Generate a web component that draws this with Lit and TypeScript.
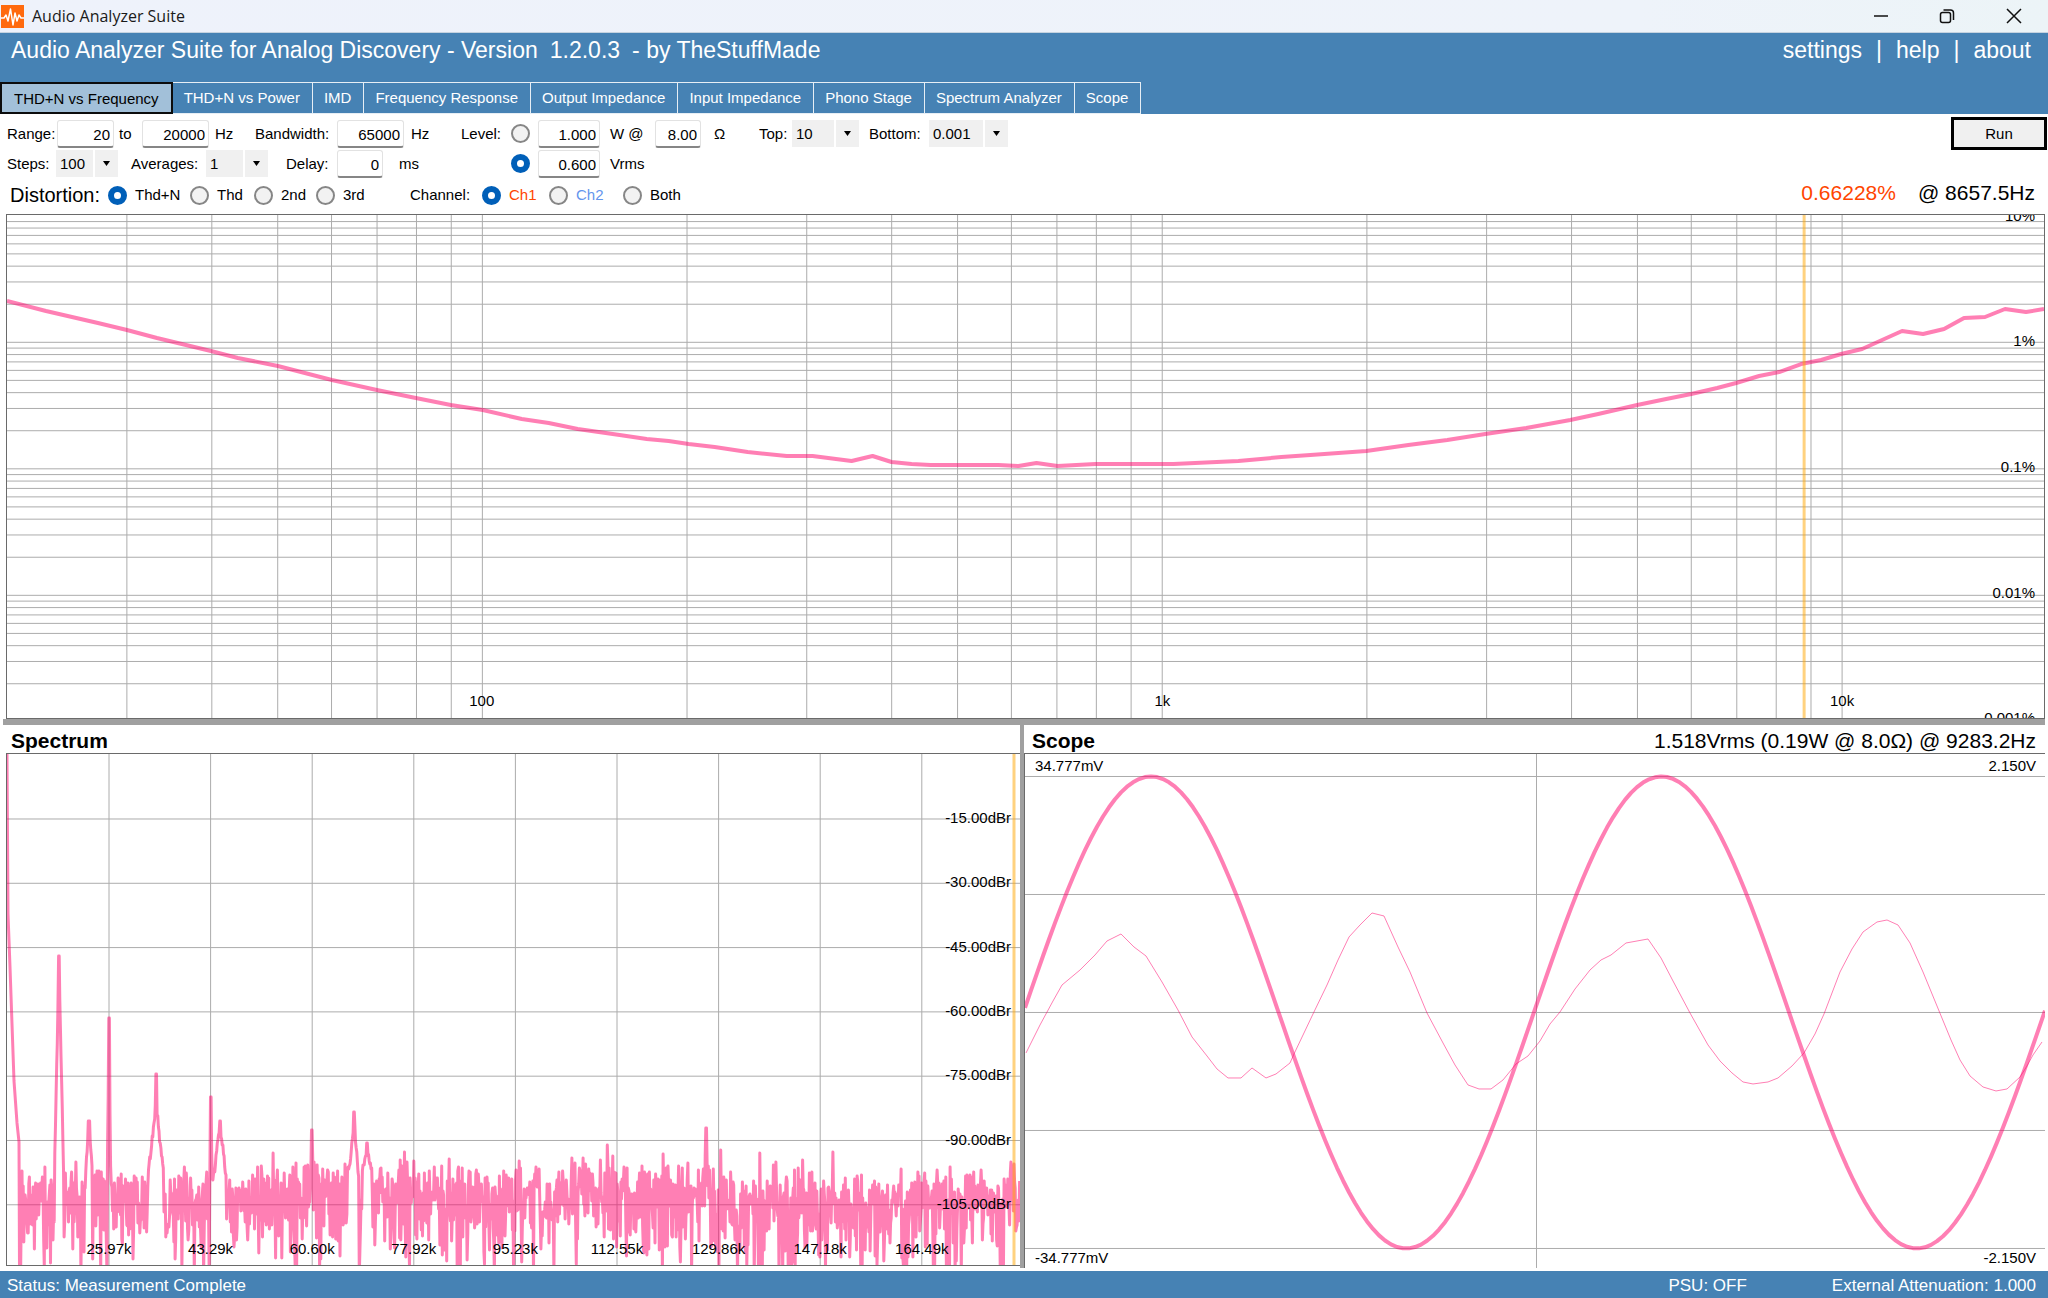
import { LitElement, html, svg, css } from "lit";
import { customElement, property, state } from "lit/decorators.js";
import { classMap } from "lit/directives/class-map.js";

type Point = [number, number];

const path = (points: Point[]) => points.map(([x, y]) => `${x},${y}`).join(" ");

/* ---------- distortion sweep, in plot units of 2038 x 503 ---------- */

const SWEEP_W = 2038;
const SWEEP_H = 503;
const DECADE_W = 680.2;
const DECADE_H = 126.5;
const freqX = (hz: number) => 475.6 + Math.log10(hz / 100) * DECADE_W;
const pctY = (pct: number) => 0.8 + (1 - Math.log10(pct)) * DECADE_H;

const sweepFreqs: number[] = [];
for (const base of [10, 100, 1000, 10000]) {
  for (let m = 1; m < 10; m++) {
    const hz = base * m;
    if (hz > 20 && hz < 20000) sweepFreqs.push(hz);
  }
}
const sweepLevels: number[] = [];
for (const base of [1, 0.1, 0.01, 0.001]) {
  for (let m = 1; m < 10; m++) {
    const y = pctY(base * m);
    if (y > 2 && y < SWEEP_H) sweepLevels.push(base * m);
  }
}

const sweepCurve: Point[] = [
  [0, 86], [39, 96], [91, 108], [120, 115], [150, 123], [204, 136], [231, 143], [271, 151],
  [325, 165], [370, 175], [409, 183], [444, 190], [476, 195], [515, 204], [542, 208], [571, 214],
  [613, 220], [640, 224], [662, 226], [682, 229], [708, 232], [741, 237], [780, 241], [806, 241],
  [845, 246], [866, 241], [885, 247], [905, 249], [924, 250], [960, 250], [992, 250], [1012, 251],
  [1030, 248], [1051, 251], [1089, 249], [1115, 249], [1167, 249], [1232, 246], [1275, 242], [1304, 240],
  [1360, 236], [1402, 230], [1441, 225], [1479, 219], [1520, 213], [1564, 205], [1592, 199], [1631, 190],
  [1660, 184], [1685, 179], [1711, 173], [1730, 168], [1753, 161], [1773, 157], [1795, 149], [1815, 145],
  [1835, 139], [1856, 134], [1896, 116], [1917, 119], [1938, 114], [1958, 103], [1979, 102], [1999, 94],
  [2020, 97], [2038, 94],
];

/* ---------- spectrum, in plot units of 1013 x 511 ---------- */

const SPEC_W = 1013;
const SPEC_H = 511;
const specX = (i: number) => 102 + i * 101.6;
const specY = (i: number) => 65 + i * 64.3;
const specFreqs = ["25.97k", "43.29k", "60.60k", "77.92k", "95.23k", "112.55k", "129.86k", "147.18k", "164.49k"];
const specLevels = ["-15.00dBr", "-30.00dBr", "-45.00dBr", "-60.00dBr", "-75.00dBr", "-90.00dBr", "-105.00dBr"];

/* Harmonics that rise above the noise floor: centre, top, slope of the skirt. */
const harmonics: [number, number, number][] = [
  [52, 202, 46], [82, 367, 14], [102, 264, 90], [149, 320, 40], [149, 346, 9], [204, 343, 80],
  [213, 367, 8], [305, 376, 30], [347, 358, 14], [346, 385, 5], [360, 389, 5], [699, 374, 30],
];

function spectrumCurve(): Point[] {
  let seed = 90121;
  const random = () => {
    seed = (seed * 1103515245 + 12345) % 2147483648;
    return (seed + 1) / 2147483649;
  };
  const points: Point[] = [[0, 0], [1, 160], [3, 213], [5, 270], [7, 327], [10, 369], [12, 388]];
  for (let x = 12.5; x <= SPEC_W; x += 0.62) {
    const floor = x < 440 ? 440 : x < 720 ? 437 : 446;
    const power = -Math.log(random());
    let y = floor - 50 * Math.log10(power);
    y = Math.max(y, floor - 50);
    for (const [cx, top, slope] of harmonics) {
      const skirt = top + Math.abs(x - cx) * slope;
      if (skirt < 415) y = Math.min(y, Math.abs(x - cx) < 0.7 ? top : skirt + random() * 10);
    }
    points.push([Math.round(x * 10) / 10, Math.round(Math.min(y, 520))]);
  }
  return points;
}

/* ---------- scope, in plot units of 1020 x 514 ---------- */

const SCOPE_W = 1020;
const SCOPE_H = 514;

function scopeSine(): Point[] {
  const points: Point[] = [];
  for (let x = 0; x <= SCOPE_W; x += 6) {
    const y = 258.5 - 236 * Math.cos((2 * Math.PI * (x - 126)) / 510.5);
    points.push([x, Math.round(y * 10) / 10]);
  }
  return points;
}

const scopeResidual: Point[] = [
  [1, 299], [15, 271], [28, 247], [37, 231], [55, 216], [70, 201], [82, 187], [96, 180], [109, 193],
  [121, 202], [137, 228], [153, 256], [167, 283], [182, 302], [192, 315], [203, 324], [216, 324],
  [227, 314], [241, 324], [251, 320], [265, 309], [269, 300], [288, 260], [302, 231], [313, 206],
  [324, 183], [335, 171], [347, 159], [359, 162], [373, 193], [385, 218], [402, 259], [418, 289],
  [430, 311], [443, 331], [454, 335], [466, 335], [478, 326], [491, 310], [503, 302], [515, 287],
  [525, 270], [535, 258], [550, 235], [565, 216], [576, 206], [586, 201], [601, 189], [623, 185],
  [636, 204], [648, 227], [665, 259], [683, 291], [695, 307], [707, 319], [718, 328], [728, 330],
  [743, 328], [753, 324], [767, 312], [779, 299], [790, 280], [799, 260], [815, 218], [827, 195],
  [838, 178], [852, 168], [862, 166], [873, 171], [885, 189], [898, 218], [912, 252], [926, 286],
  [935, 306], [945, 322], [958, 333], [971, 337], [982, 335], [995, 323], [1002, 312], [1008, 301],
  [1017, 288],
];

/* ---------- plot surface shared by the three graphs ---------- */

interface Label {
  text: string;
  x?: number;
  y: number;
  side?: "left" | "right";
}

@customElement("plot-surface")
class PlotSurface extends LitElement {
  @property({ type: Number }) w = 100;
  @property({ type: Number }) h = 100;
  @property() name = "";
  @property({ attribute: false }) columns: number[] = [];
  @property({ attribute: false }) rows: number[] = [];
  @property({ attribute: false }) curves: { points: string; width: number }[] = [];
  @property({ attribute: false }) labels: Label[] = [];
  @property({ attribute: false }) cursors: number[] = [];

  static styles = css`
    :host {
      display: block;
      position: relative;
      overflow: hidden;
      background: #fff;
    }
    .canvas {
      position: absolute;
      inset: 0;
      width: 100%;
      height: 100%;
    }
    .canvas * {
      vector-effect: non-scaling-stroke;
    }
    .grid {
      stroke: #acacac;
      stroke-width: 1;
    }
    .curve {
      fill: none;
      stroke: #ff0069;
      stroke-opacity: 0.5;
      stroke-linejoin: round;
    }
    .cursor {
      stroke: #ffa500;
      stroke-opacity: 0.5;
      stroke-width: 3;
    }
    .label {
      position: absolute;
      font: 15px/18px "Liberation Sans", Arial, sans-serif;
      color: #000;
      white-space: nowrap;
      transform: translate(-50%, -50%);
    }
    .label.right {
      right: 9px;
      transform: translateY(-50%);
    }
    .label.left {
      left: 10px;
      transform: translateY(-50%);
    }
  `;

  render() {
    return html`
      <svg class="canvas" role="img" aria-label=${this.name} viewBox="0 0 ${this.w} ${this.h}" preserveAspectRatio="none">
        ${this.columns.map((x) => svg`<line class="grid" x1=${x} y1="0" x2=${x} y2=${this.h}></line>`)}
        ${this.rows.map((y) => svg`<line class="grid" x1="0" y1=${y} x2=${this.w} y2=${y}></line>`)}
        ${this.curves.map((c) => svg`<polyline class="curve" stroke-width=${c.width} points=${c.points}></polyline>`)}
        ${this.cursors.map((x) => svg`<line class="cursor" x1=${x} y1="0" x2=${x} y2=${this.h}></line>`)}
      </svg>
      ${this.labels.map((l) => {
        const top = `top:${(l.y / this.h) * 100}%`;
        const left = l.side ? "" : `;left:${((l.x ?? 0) / this.w) * 100}%`;
        return html`<span class="label ${l.side ?? ""}" style=${top + left}>${l.text}</span>`;
      })}
    `;
  }
}

const tabs = [
  "THD+N vs Frequency",
  "THD+N vs Power",
  "IMD",
  "Frequency Response",
  "Output Impedance",
  "Input Impedance",
  "Phono Stage",
  "Spectrum Analyzer",
  "Scope",
];

@customElement("app-root")
class AppRoot extends LitElement {
  @state() private tab = 0;

  static styles = css`
    :host {
      display: flex;
      flex-direction: column;
      min-height: 100vh;
      background: #fff;
      color: #000;
      font: 15px/18px "Liberation Sans", Arial, sans-serif;
    }
    * {
      box-sizing: border-box;
    }
    .titlebar {
      display: flex;
      align-items: center;
      height: 33px;
      padding-left: 1px;
      background: linear-gradient(90deg, #eef2fb, #eef3fa 80%, #ecf4f7);
      border-bottom: 1px solid #c5d3e0;
    }
    .logo {
      width: 23px;
      height: 23px;
      margin-right: 8px;
    }
    .window-name {
      flex: 1;
      font: 16px/20px "Open Sans", "Noto Sans", sans-serif;
      color: #1a1a1a;
    }
    .win {
      width: 66px;
      height: 32px;
      padding: 0;
      border: 0;
      background: none;
      display: grid;
      place-items: center;
    }
    .win svg {
      width: 16px;
      height: 16px;
      fill: none;
      stroke: #111;
    }
    .win:last-child {
      width: 68px;
    }
    .banner {
      background: #4682b4;
      color: #fff;
      padding-top: 3px;
    }
    .headline {
      display: flex;
      align-items: baseline;
      height: 46px;
      padding: 0 17px 0 11px;
      line-height: 28px;
    }
    .product {
      margin: 0;
      font-size: 23px;
      font-weight: 400;
      display: flex;
      gap: 12px;
      flex: 1;
      white-space: nowrap;
    }
    .links {
      display: flex;
      gap: 14px;
      font-size: 23px;
    }
    .links a {
      color: inherit;
      text-decoration: none;
    }
    .tabs {
      display: flex;
      height: 32px;
    }
    .tab {
      font: inherit;
      color: #fff;
      background: none;
      border: solid #e6eef5;
      border-width: 1px 1px 1px 0;
      padding: 0 12px 0 11px;
      white-space: nowrap;
    }
    .tab.on {
      color: #000;
      background: #a2c0d9;
      border: 2px solid #0c0c0c;
      padding: 2px 12px 0;
    }
    .toolbar {
      padding: 3px 0;
    }
    .row {
      display: grid;
      align-items: center;
      height: 31px;
      white-space: nowrap;
    }
    .row.a {
      padding: 0 1px 0 7px;
      grid-template-columns: 50px 62px 23px 73px 40px 82px 74px 50px 50px 27px 72px 45px 59px 45px 33px 77px 60px 80px 1fr 96px;
    }
    .row.b {
      padding-left: 7px;
      grid-template-columns: 49px 75px 75px 80px 51px 62px 112px 27px 72px 1fr;
    }
    .row.c {
      height: 32px;
      padding: 0 13px 0 10px;
      grid-template-columns: 98px 82px 64px 62px 94px 72px 67px 74px 1fr auto;
    }
    .box {
      font: inherit;
      height: 28px;
      padding: 2px 3px 0;
      text-align: right;
      border: 1px solid #e2e2e2;
      border-bottom: 2px solid #868686;
      border-radius: 3px;
      background: #fff;
      color: #000;
    }
    .w46 {
      width: 46px;
    }
    .w57 {
      width: 57px;
    }
    .w62 {
      width: 62px;
    }
    .w67 {
      width: 67px;
    }
    .w79 {
      width: 79px;
    }
    .pick {
      display: grid;
      height: 27px;
      background: linear-gradient(#fff, #fff) right 23px top 0 / 2px 100% no-repeat #f0f0f0;
    }
    .pick select {
      grid-area: 1 / 1;
      appearance: none;
      font: inherit;
      color: #000;
      border: 0;
      padding: 1px 0 0 4px;
      background: none;
    }
    .pick svg {
      grid-area: 1 / 1;
      justify-self: end;
      align-self: center;
      width: 7px;
      height: 5px;
      margin-right: 8px;
      pointer-events: none;
    }
    .dot {
      appearance: none;
      width: 19px;
      height: 19px;
      margin: 0;
      border: 2px solid #868686;
      border-radius: 50%;
      background: #f2f2f2;
    }
    .dot:checked {
      border: 6px solid #005fb8;
      background: #fff;
    }
    .choice {
      display: flex;
      align-items: center;
      gap: 8px;
    }
    .ch1 {
      color: #ff4500;
    }
    .ch2 {
      color: #6495ed;
    }
    .big {
      font-size: 20px;
      line-height: 24px;
    }
    .run {
      font: inherit;
      height: 33px;
      border: 3px solid #000;
      background: #f0f0f0;
      color: #000;
      padding: 0;
    }
    .readout {
      display: flex;
      gap: 22px;
      font-size: 21px;
      line-height: 24px;
      padding-bottom: 4px;
    }
    .work {
      flex: 1;
      display: flex;
      flex-direction: column;
      padding: 0 3px 3px;
    }
    .sweep {
      flex: 504 1 0;
      margin-left: 3px;
      border: 1px solid #6a6a6a;
    }
    .bar {
      height: 6px;
      background: #a0a0a0;
    }
    .panes {
      flex: 544 1 0;
      display: grid;
      grid-template-columns: 1017fr 4px 1021fr;
    }
    .divider {
      background: #a0a0a0;
    }
    .pane {
      display: flex;
      flex-direction: column;
      min-width: 0;
    }
    .pane-head {
      display: flex;
      justify-content: space-between;
      height: 28px;
      padding: 4px 9px 0 8px;
      font-size: 21px;
      line-height: 24px;
      overflow: hidden;
      white-space: nowrap;
    }
    .pane-head h2 {
      margin: 0;
      font-size: inherit;
    }
    .pane plot-surface {
      flex: 1;
      border: 1px solid #6a6a6a;
      border-right: 0;
    }
    .spectrum plot-surface {
      margin: 0 0 2px 3px;
    }
    .scope plot-surface {
      border-bottom: 0;
    }
    .status {
      display: flex;
      gap: 85px;
      height: 27px;
      padding: 2px 12px 0 7px;
      align-items: center;
      background: #4682b4;
      color: #fff;
      font-size: 17px;
    }
    .status-text {
      flex: 1;
    }
  `;

  private box(id: string, value: string, width: string, label = "") {
    return html`<input class="box ${width}" id=${id} type="text" .value=${value} aria-label=${label || id} />`;
  }

  private pick(id: string, value: string, width: string) {
    return html`<span class="pick ${width}">
      <select id=${id}><option selected>${value}</option></select>
      <svg viewBox="0 0 7 5" aria-hidden="true"><path d="M0 0H7L3.500 5Z" /></svg>
    </span>`;
  }

  private choice(group: string, text: string, checked = false, tone = "") {
    return html`<label class="choice"
      ><input class="dot" type="radio" name=${group} .checked=${checked} /><span class=${tone}>${text}</span></label
    >`;
  }

  render() {
    return html`
      <header class="titlebar">
        <svg class="logo" viewBox="0 0 23 23" aria-hidden="true">
          <rect width="23" height="23" fill="#ff6a0e" />
          <path
            d="M0 13H3L5 10L7 16L9.500 4L12 20L14 8L16 16L18 10L20 13H23"
            fill="none"
            stroke="#fff"
            stroke-width="1.500"
            stroke-linejoin="round"
          />
        </svg>
        <span class="window-name">Audio Analyzer Suite</span>
        <button class="win" aria-label="Minimize">
          <svg viewBox="0 0 16 16"><path d="M1 8H15" stroke-width="1.500" /></svg>
        </button>
        <button class="win" aria-label="Restore">
          <svg viewBox="0 0 16 16">
            <rect x="1.500" y="4.500" width="10" height="10" rx="2" stroke-width="1.500" />
            <path d="M4.500 2H11.500Q14.500 2 14.500 5V12" stroke-width="1.500" />
          </svg>
        </button>
        <button class="win" aria-label="Close">
          <svg viewBox="0 0 16 16"><path d="M1 1L15 15M15 1L1 15" stroke-width="1.500" /></svg>
        </button>
      </header>

      <div class="banner">
        <div class="headline">
          <h1 class="product">
            <span>Audio Analyzer Suite for Analog Discovery - Version</span><span>1.2.0.3</span><span>- by TheStuffMade</span>
          </h1>
          <nav class="links">
            <a href="#settings">settings</a><span>|</span><a href="#help">help</a><span>|</span><a href="#about">about</a>
          </nav>
        </div>
        <nav class="tabs">
          ${tabs.map(
            (name, i) =>
              html`<button class=${classMap({ tab: true, on: i === this.tab })} @click=${() => (this.tab = i)}>
                ${name}
              </button>`
          )}
        </nav>
      </div>

      <section class="toolbar">
        <div class="row a">
          <label for="from">Range:</label>${this.box("from", "20", "w57", "Range from")}
          <label for="to">to</label>${this.box("to", "20000", "w67", "Range to")}
          <span>Hz</span>
          <label for="bandwidth">Bandwidth:</label>${this.box("bandwidth", "65000", "w67", "Bandwidth")}
          <span>Hz</span>
          <span>Level:</span>
          <input class="dot" type="radio" name="level" aria-label="Level in watts" />
          ${this.box("watts", "1.000", "w62", "Watts")}
          <label for="watts">W @</label>
          ${this.box("ohms", "8.00", "w46", "Ohms")}
          <label for="ohms">Ω</label>
          <label for="top">Top:</label>${this.pick("top", "10", "w67")}
          <label for="bottom">Bottom:</label>${this.pick("bottom", "0.001", "w79")}
          <span></span>
          <button class="run">Run</button>
        </div>
        <div class="row b">
          <label for="steps">Steps:</label>${this.pick("steps", "100", "w62")}
          <label for="averages">Averages:</label>${this.pick("averages", "1", "w62")}
          <label for="delay">Delay:</label>${this.box("delay", "0", "w46", "Delay")}
          <span>ms</span>
          <input class="dot" type="radio" name="level" aria-label="Level in volts" .checked=${true} />
          ${this.box("volts", "0.600", "w62", "Volts")}
          <label for="volts">Vrms</label>
        </div>
        <div class="row c">
          <span class="big">Distortion:</span>
          ${this.choice("distortion", "Thd+N", true)} ${this.choice("distortion", "Thd")}
          ${this.choice("distortion", "2nd")} ${this.choice("distortion", "3rd")}
          <span>Channel:</span>
          ${this.choice("channel", "Ch1", true, "ch1")} ${this.choice("channel", "Ch2", false, "ch2")}
          ${this.choice("channel", "Both")}
          <div class="readout"><span class="ch1">0.66228%</span><span>@ 8657.5Hz</span></div>
        </div>
      </section>

      <main class="work">
        <plot-surface
          class="sweep"
          name="THD+N vs Frequency"
          .w=${SWEEP_W}
          .h=${SWEEP_H}
          .columns=${sweepFreqs.map(freqX)}
          .rows=${sweepLevels.map(pctY)}
          .curves=${[{ points: path(sweepCurve), width: 4 }]}
          .cursors=${[1798]}
          .labels=${[
            { text: "10%", y: 1, side: "right" },
            { text: "1%", y: 126, side: "right" },
            { text: "0.1%", y: 252, side: "right" },
            { text: "0.01%", y: 378, side: "right" },
            { text: "0.001%", y: 503, side: "right" },
            { text: "100", x: 475, y: 486 },
            { text: "1k", x: 1156, y: 486 },
            { text: "10k", x: 1836, y: 486 },
          ]}
        ></plot-surface>
        <div class="bar"></div>
        <div class="panes">
          <section class="pane spectrum">
            <div class="pane-head"><h2>Spectrum</h2></div>
            <plot-surface
              name="Spectrum"
              .w=${SPEC_W}
              .h=${SPEC_H}
              .columns=${specFreqs.map((_, i) => specX(i))}
              .rows=${specLevels.map((_, i) => specY(i))}
              .curves=${[{ points: path(spectrumCurve()), width: 3 }]}
              .cursors=${[1007]}
              .labels=${[
                ...specFreqs.map((text, i) => ({ text, x: specX(i), y: 495 })),
                ...specLevels.map((text, i) => ({ text, y: specY(i) - 1, side: "right" })),
              ]}
            ></plot-surface>
          </section>
          <div class="divider"></div>
          <section class="pane scope">
            <div class="pane-head">
              <h2>Scope</h2>
              <span>1.518Vrms (0.19W @ 8.0Ω) @ 9283.2Hz</span>
            </div>
            <plot-surface
              name="Scope"
              .w=${SCOPE_W}
              .h=${SCOPE_H}
              .columns=${[511.5]}
              .rows=${[22.5, 140.5, 258.5, 376.5, 494.5]}
              .curves=${[
                { points: path(scopeSine()), width: 4 },
                { points: path(scopeResidual), width: 1 },
              ]}
              .labels=${[
                { text: "34.777mV", y: 12, side: "left" },
                { text: "-34.777mV", y: 504, side: "left" },
                { text: "2.150V", y: 12, side: "right" },
                { text: "-2.150V", y: 504, side: "right" },
              ]}
            ></plot-surface>
          </section>
        </div>
      </main>

      <footer class="status">
        <span class="status-text">Status: Measurement Complete</span>
        <span>PSU: OFF</span>
        <span>External Attenuation: 1.000</span>
      </footer>
    `;
  }
}
